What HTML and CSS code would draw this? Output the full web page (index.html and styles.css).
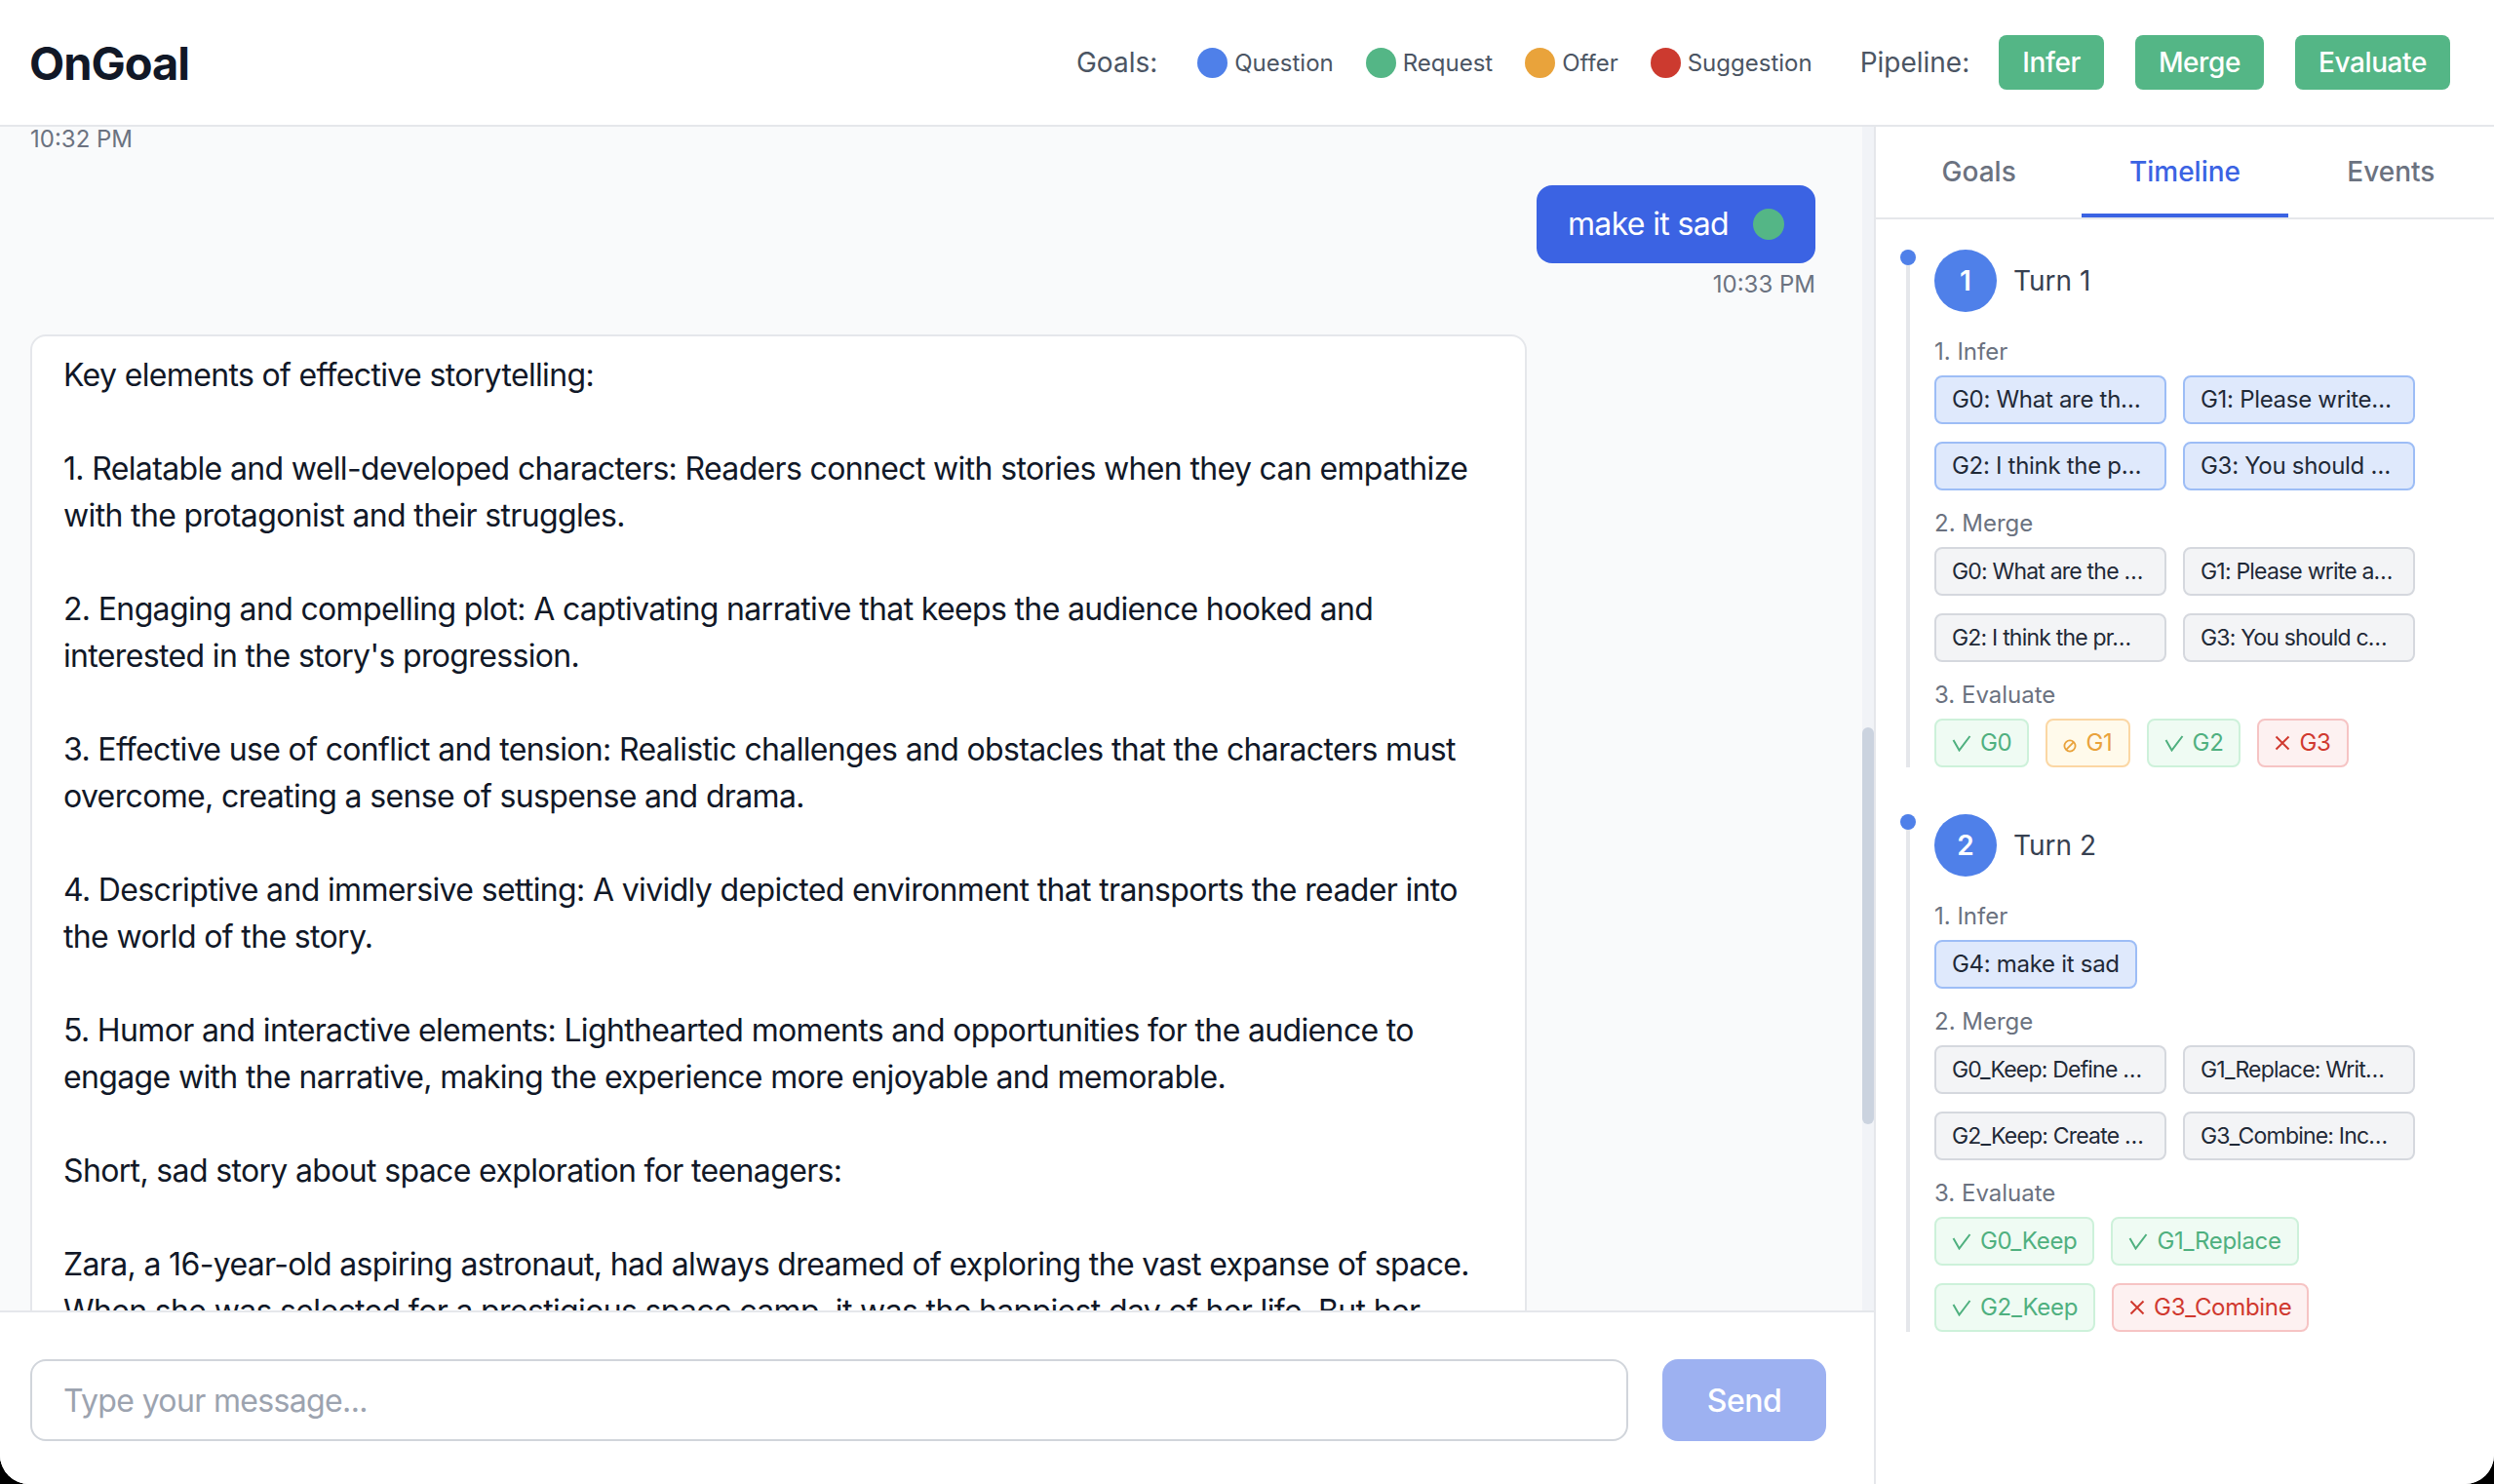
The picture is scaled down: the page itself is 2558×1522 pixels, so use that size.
FILE: index.html
```html
<!DOCTYPE html>
<html lang="en">
<head>
<meta charset="utf-8">
<title>OnGoal</title>
<link rel="stylesheet" href="styles.css">
</head>
<body>
<div class="app">
  <header class="topbar">
    <div class="logo">OnGoal</div>
    <div class="top-right">
      <div class="legend">
        <span class="legend-title">Goals:</span>
        <span class="legend-item"><span class="dot dot-q"></span>Question</span>
        <span class="legend-item"><span class="dot dot-r"></span>Request</span>
        <span class="legend-item"><span class="dot dot-o"></span>Offer</span>
        <span class="legend-item"><span class="dot dot-s"></span>Suggestion</span>
      </div>
      <div class="pipeline">
        <span class="pipeline-title">Pipeline:</span>
        <button class="pbtn">Infer</button>
        <button class="pbtn">Merge</button>
        <button class="pbtn">Evaluate</button>
      </div>
    </div>
  </header>

  <div class="workspace">
    <main class="chat">
      <div class="chat-scroll">
        <div class="messages">
          <div class="stamp stamp-top">10:32 PM</div>
          <div class="msg-user">
            <div class="bubble">make it sad <span class="dot dot-r bubble-dot"></span></div>
            <div class="stamp">10:33 PM</div>
          </div>
          <div class="bot-box">
            <p>Key elements of effective storytelling:</p>
            <p>1. Relatable and well-developed characters: Readers connect with stories when they can empathize with the protagonist and their struggles.</p>
            <p>2. Engaging and compelling plot: A captivating narrative that keeps the audience hooked and interested in the story's progression.</p>
            <p>3. Effective use of conflict and tension: Realistic challenges and obstacles that the characters must overcome, creating a sense of suspense and drama.</p>
            <p>4. Descriptive and immersive setting: A vividly depicted environment that transports the reader into the world of the story.</p>
            <p>5. Humor and interactive elements: Lighthearted moments and opportunities for the audience to engage with the narrative, making the experience more enjoyable and memorable.</p>
            <p>Short, sad story about space exploration for teenagers:</p>
            <p>Zara, a 16-year-old aspiring astronaut, had always dreamed of exploring the vast expanse of space. When she was selected for a prestigious space camp, it was the happiest day of her life. But her excitement slowly faded as the weeks went by and the stars seemed farther away than ever.</p>
          </div>
        </div>
        <div class="scrollbar"><div class="thumb"></div></div>
      </div>
      <div class="composer">
        <input class="composer-input" type="text" placeholder="Type your message..." autofocus>
        <button class="send">Send</button>
      </div>
    </main>

    <aside class="sidebar">
      <nav class="tabs">
        <div class="tab">Goals</div>
        <div class="tab tab-active">Timeline</div>
        <div class="tab">Events</div>
      </nav>
      <div class="timeline">
        <section class="turn">
          <span class="turn-pin"></span>
          <div class="turn-head"><span class="turn-num">1</span><span class="turn-title">Turn 1</span></div>
          <div class="stage">
            <div class="stage-label">1. Infer</div>
            <div class="chips">
              <span class="chip chip-infer cut">G0: What are th…</span>
              <span class="chip chip-infer cut">G1: Please write…</span>
              <span class="chip chip-infer cut">G2: I think the p…</span>
              <span class="chip chip-infer cut">G3: You should …</span>
            </div>
          </div>
          <div class="stage">
            <div class="stage-label">2. Merge</div>
            <div class="chips">
              <span class="chip chip-merge cut">G0: What are the …</span>
              <span class="chip chip-merge cut">G1: Please write a…</span>
              <span class="chip chip-merge cut">G2: I think the pr…</span>
              <span class="chip chip-merge cut">G3: You should c…</span>
            </div>
          </div>
          <div class="stage">
            <div class="stage-label">3. Evaluate</div>
            <div class="chips">
              <span class="chip chip-ok"><svg class="ico" width="20" height="17" viewBox="0 0 20 17"><path d="M1.5 5 L7.5 15.5 L18.5 1" fill="none" stroke="currentColor" stroke-width="2"/></svg>G0</span>
              <span class="chip chip-warn"><svg class="ico ico-small" width="14" height="14" viewBox="0 0 14 14"><circle cx="7" cy="7" r="5.6" fill="none" stroke="currentColor" stroke-width="1.8"/><path d="M3.2 10.8 L10.8 3.2" stroke="currentColor" stroke-width="1.8"/></svg>G1</span>
              <span class="chip chip-ok"><svg class="ico" width="20" height="17" viewBox="0 0 20 17"><path d="M1.5 5 L7.5 15.5 L18.5 1" fill="none" stroke="currentColor" stroke-width="2"/></svg>G2</span>
              <span class="chip chip-bad"><svg class="ico" width="16" height="16" viewBox="0 0 16 16"><path d="M1.5 1.5 L14.5 14.5 M14.5 1.5 L1.5 14.5" fill="none" stroke="currentColor" stroke-width="2"/></svg>G3</span>
            </div>
          </div>
        </section>

        <section class="turn">
          <span class="turn-pin"></span>
          <div class="turn-head"><span class="turn-num">2</span><span class="turn-title">Turn 2</span></div>
          <div class="stage">
            <div class="stage-label">1. Infer</div>
            <div class="chips">
              <span class="chip chip-infer">G4: make it sad</span>
            </div>
          </div>
          <div class="stage">
            <div class="stage-label">2. Merge</div>
            <div class="chips">
              <span class="chip chip-merge cut">G0_Keep: Define …</span>
              <span class="chip chip-merge cut">G1_Replace: Writ…</span>
              <span class="chip chip-merge cut">G2_Keep: Create …</span>
              <span class="chip chip-merge cut">G3_Combine: Inc…</span>
            </div>
          </div>
          <div class="stage">
            <div class="stage-label">3. Evaluate</div>
            <div class="chips">
              <span class="chip chip-ok"><svg class="ico" width="20" height="17" viewBox="0 0 20 17"><path d="M1.5 5 L7.5 15.5 L18.5 1" fill="none" stroke="currentColor" stroke-width="2"/></svg>G0_Keep</span>
              <span class="chip chip-ok"><svg class="ico" width="20" height="17" viewBox="0 0 20 17"><path d="M1.5 5 L7.5 15.5 L18.5 1" fill="none" stroke="currentColor" stroke-width="2"/></svg>G1_Replace</span>
              <span class="chip chip-ok"><svg class="ico" width="20" height="17" viewBox="0 0 20 17"><path d="M1.5 5 L7.5 15.5 L18.5 1" fill="none" stroke="currentColor" stroke-width="2"/></svg>G2_Keep</span>
              <span class="chip chip-bad"><svg class="ico" width="16" height="16" viewBox="0 0 16 16"><path d="M1.5 1.5 L14.5 14.5 M14.5 1.5 L1.5 14.5" fill="none" stroke="currentColor" stroke-width="2"/></svg>G3_Combine</span>
            </div>
          </div>
        </section>
      </div>
    </aside>
  </div>
</div>
</body>
</html>
```

FILE: styles.css
```css
* { box-sizing: border-box; }

html, body {
  margin: 0;
  padding: 0;
  background: #000;
}

body {
  font-family: Inter, "Liberation Sans", Arial, sans-serif;
  color: #111827;
}

.app {
  width: 2558px;
  height: 1522px;
  background: #fff;
  border-radius: 0 0 30px 30px;
  overflow: hidden;
  display: flex;
  flex-direction: column;
}

/* ---------- top bar ---------- */
.topbar {
  height: 130px;
  flex: none;
  display: flex;
  align-items: center;
  justify-content: space-between;
  padding: 0 45px 0 30px;
  border-bottom: 2px solid #e5e7eb;
  background: #fff;
}

.logo {
  font-size: 47px;
  font-weight: 700;
  letter-spacing: -1px;
  color: #111827;
}

.top-right {
  display: flex;
  align-items: center;
}

.legend {
  display: flex;
  align-items: center;
  gap: 33px;
}

.legend-title,
.pipeline-title {
  font-size: 28px;
  color: #4b5563;
}

.legend-title { margin-right: 8px; }

.legend-item {
  display: inline-flex;
  align-items: center;
  gap: 7px;
  font-size: 24px;
  color: #4b5563;
}

.dot {
  display: inline-block;
  width: 31px;
  height: 31px;
  border-radius: 50%;
  flex: none;
}
.dot-q { background: #4f80e9; }
.dot-r { background: #54b686; }
.dot-o { background: #e9a33b; }
.dot-s { background: #cc3a2f; }

.pipeline {
  display: flex;
  align-items: center;
  gap: 32px;
  margin-left: 49px;
}

.pipeline-title { margin-right: -2px; }

.pbtn {
  height: 56px;
  padding: 0 24px;
  border: none;
  border-radius: 8px;
  background: #54b686;
  color: #fff;
  font-family: inherit;
  font-size: 28px;
  font-weight: 500;
  letter-spacing: -0.4px;
}

/* ---------- workspace ---------- */
.workspace {
  flex: 1;
  display: flex;
  min-height: 0;
}

.chat {
  flex: 1;
  display: flex;
  flex-direction: column;
  background: #f9fafb;
  min-width: 0;
}

.chat-scroll {
  flex: 1;
  display: flex;
  min-height: 0;
  overflow: hidden;
}

.messages {
  flex: 1;
  padding: 0 48px 0 31px;
  overflow: hidden;
}

.stamp {
  font-size: 24px;
  line-height: 32px;
  color: #6b7280;
}

.stamp-top {
  line-height: 26px;
}

.msg-user {
  display: flex;
  flex-direction: column;
  align-items: flex-end;
  margin-top: 34px;
}

.bubble {
  display: inline-flex;
  align-items: center;
  gap: 25px;
  padding: 16px 32px;
  height: 80px;
  border-radius: 16px;
  background: #3b63e3;
  color: #fff;
  font-size: 32px;
  line-height: 48px;
  letter-spacing: -0.65px;
}

.bubble-dot { width: 32px; height: 32px; }

.msg-user .stamp { margin-top: 6px; }

.bot-box {
  margin-top: 35px;
  max-width: 1535px;
  background: #fff;
  border: 2px solid #e5e7eb;
  border-radius: 16px;
  padding: 16px 32px;
  font-size: 32px;
  line-height: 48px;
  letter-spacing: -0.65px;
  color: #111827;
}

.bot-box p { margin: 0 0 48px; }
.bot-box p:last-child { margin-bottom: 0; }

.scrollbar {
  width: 12px;
  flex: none;
  background: #f1f3f7;
}

.thumb {
  margin-top: 616px;
  height: 407px;
  border-radius: 6px;
  background: #cbd3df;
}

.composer {
  flex: none;
  display: flex;
  align-items: center;
  gap: 35px;
  padding: 48px 49px 44px 31px;
  border-top: 2px solid #e5e7eb;
  background: #fff;
}

.composer-input {
  flex: 1;
  height: 84px;
  border: 2px solid #d1d5db;
  border-radius: 16px;
  padding: 0 32px;
  font-family: inherit;
  font-size: 32px;
  letter-spacing: -0.65px;
  color: #111827;
  caret-color: #111827;
  background: #fff;
  outline: none;
}
.composer-input::placeholder { color: #9ca3af; }

.send {
  width: 168px;
  height: 84px;
  border: none;
  border-radius: 16px;
  background: #9db1f1;
  color: #fff;
  font-family: inherit;
  font-size: 32px;
  font-weight: 500;
  letter-spacing: -0.5px;
}

/* ---------- sidebar ---------- */
.sidebar {
  width: 636px;
  flex: none;
  border-left: 2px solid #e5e7eb;
  background: #fff;
  display: flex;
  flex-direction: column;
}

.tabs {
  display: grid;
  grid-template-columns: repeat(3, 1fr);
  border-bottom: 2px solid #e5e7eb;
}

.tab {
  text-align: center;
  padding: 26px 0 23px;
  line-height: 40px;
  font-size: 28px;
  font-weight: 500;
  color: #6b7280;
  border-bottom: 4px solid transparent;
}

.tab-active {
  color: #3b63e3;
  border-bottom-color: #3b63e3;
}

.timeline {
  padding: 31px 32px 0 31px;
}

.turn {
  position: relative;
  border-left: 4px solid #e5e7eb;
  padding-left: 25px;
  margin-bottom: 48px;
}

.turn-pin {
  position: absolute;
  left: -10px;
  top: 0;
  width: 16px;
  height: 16px;
  border-radius: 50%;
  background: #4f80e9;
}

.turn-head {
  display: flex;
  align-items: center;
  gap: 17px;
  height: 64px;
}

.turn-num {
  width: 64px;
  height: 64px;
  border-radius: 50%;
  background: #4f80e9;
  color: #fff;
  display: flex;
  align-items: center;
  justify-content: center;
  font-size: 28px;
  font-weight: 600;
}

.turn-title {
  font-size: 28px;
  color: #374151;
}

.stage { margin-top: 18px; }
.turn-head + .stage { margin-top: 25px; }

.stage-label {
  font-size: 24px;
  line-height: 32px;
  color: #6b7280;
  margin-bottom: 8px;
}

.chips {
  display: flex;
  flex-wrap: wrap;
  gap: 18px 17px;
}

.chip {
  display: inline-flex;
  align-items: center;
  gap: 9px;
  max-width: 238px;
  height: 50px;
  padding: 7px 16px;
  border: 2px solid;
  border-radius: 8px;
  font-size: 24px;
  line-height: 32px;
  letter-spacing: -0.3px;
  white-space: nowrap;
  overflow: hidden;
  text-overflow: ellipsis;
  color: #1f2937;
}

.cut {
  display: inline-block;
  width: 238px;
}

.chip-merge.cut {
  font-size: 23px;
  letter-spacing: -0.8px;
}

.chip-infer { background: #dfe9fc; border-color: #9dbdf6; }
.chip-merge { background: #f3f4f6; border-color: #d5d8de; }
.chip-ok { background: #effbf3; border-color: #cdf1da; color: #4fb07f; }
.chip-warn { background: #fffaeb; border-color: #fbd7a4; color: #e9a23b; }
.chip-bad { background: #fdf1f1; border-color: #f6c4c4; color: #d0392f; }

.ico { flex: none; display: block; }
.ico-small { margin-top: 5px; }
```
